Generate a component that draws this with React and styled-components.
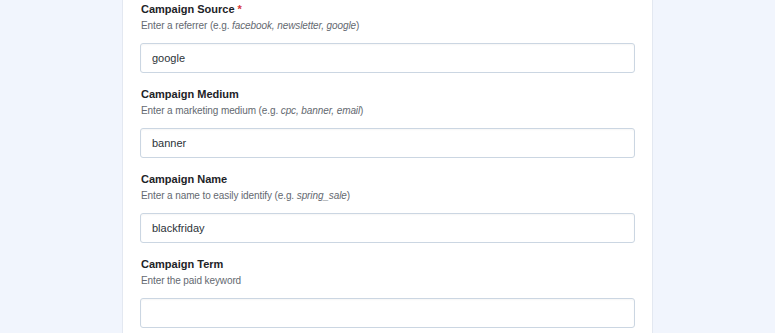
import React from "react";
import styled, { createGlobalStyle } from "styled-components";

const Global = createGlobalStyle`
  html, body { margin: 0; padding: 0; background: #f1f5fd; }
  body { font-family: "Liberation Sans", Arial, Helvetica, sans-serif; }
`;

const Page = styled.div`
  display: flex;
  min-height: 333px;
  padding-left: 122px;
  box-sizing: border-box;
`;

const Panel = styled.div`
  width: 531px;
  background: #fff;
  border-left: 1px solid #e3e8f1;
  border-right: 1px solid #e3e8f1;
  box-sizing: border-box;
  padding: 1px 17px 0 17px;
  display: flex;
  flex-direction: column;
`;

const Field = styled.div`
  display: flex;
  flex-direction: column;
  margin-bottom: 13px;
`;

const Label = styled.div`
  font-size: 11px;
  font-weight: 700;
  line-height: 16px;
  color: #1d2327;
  padding-left: 1px;
`;

const Req = styled.span`
  color: #d63638;
  margin-left: 3px;
`;

const Desc = styled.div`
  font-size: 10px;
  line-height: 15px;
  margin-top: 1px;
  color: #646970;
  padding-left: 1px;
  letter-spacing: -0.1px;
  em { font-style: italic; }
`;

const Input = styled.div`
  margin-top: 10px;
  height: 30px;
  box-sizing: border-box;
  border: 1px solid #cbd6e2;
  border-radius: 3px;
  box-shadow: inset 0 1px 2px rgba(0, 0, 0, 0.04);
  display: flex;
  align-items: center;
  padding: 0 11px;
  font-size: 11px;
  color: #2c3338;
`;

const fields = [
  { label: "Campaign Source", required: true, desc: <>Enter a referrer (e.g. <em>facebook, newsletter, google</em>)</>, value: "google" },
  { label: "Campaign Medium", desc: <>Enter a marketing medium (e.g. <em>cpc, banner, email</em>)</>, value: "banner" },
  { label: "Campaign Name", desc: <>Enter a name to easily identify (e.g. <em>spring_sale</em>)</>, value: "blackfriday" },
  { label: "Campaign Term", desc: <>Enter the paid keyword</>, value: "" },
];

export default function App() {
  return (
    <>
      <Global />
      <Page>
        <Panel>
          {fields.map((f) => (
            <Field key={f.label}>
              <Label>
                {f.label}
                {f.required && <Req>*</Req>}
              </Label>
              <Desc>{f.desc}</Desc>
              <Input>{f.value}</Input>
            </Field>
          ))}
        </Panel>
      </Page>
    </>
  );
}
